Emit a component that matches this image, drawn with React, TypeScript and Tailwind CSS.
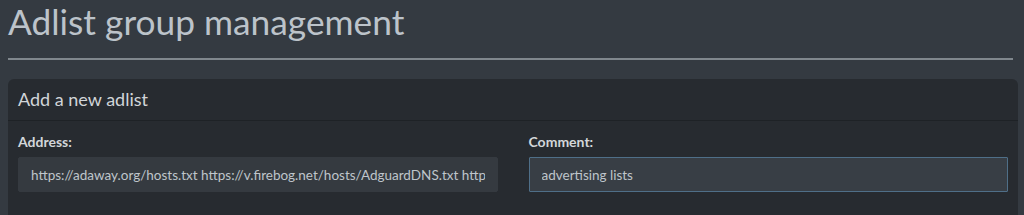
export default function App() {
  return (
    <div className="h-[215px] w-[1024px] overflow-hidden bg-[#343a41] font-['Lato','Liberation_Sans',sans-serif]">
      {/* Page header */}
      <div className="px-2">
        <h1 className="text-[35.3px] leading-[44px] font-normal text-[#bcc3ca]">Adlist group management</h1>
        <div className="mt-[14px] h-[2px] mr-[3px] bg-[#80878d]" />
      </div>

      {/* Add adlist card */}
      <div className="mx-2 mt-[19px] mr-[6px] rounded-t-[6px] bg-[#272b30]">
        <div className="flex h-[42px] items-center border-b border-[#1e2226] px-[10px]">
          <h3 className="text-[18px] text-[#d1d5d9]">Add a new adlist</h3>
        </div>
        <div className="grid grid-cols-2 gap-[31px] px-[10px] pb-6 pt-[11px]">
          <div>
            <label className="block text-[14px] font-bold leading-[20px] text-[#d3d7da]">Address:</label>
            <input
              readOnly
              value="https://adaway.org/hosts.txt https://v.firebog.net/hosts/AdguardDNS.txt https://v.firebog.net/hosts/Easylist.txt"
              className="mt-[5px] h-[35px] w-full rounded-[2px] border border-[#353a40] bg-[#353a40] px-[12px] text-[13.5px] text-[#bfc5cb] outline-none"
            />
          </div>
          <div>
            <label className="block text-[14px] font-bold leading-[20px] text-[#d3d7da]">Comment:</label>
            <input
              readOnly
              value="advertising lists"
              className="mt-[5px] h-[35px] w-full rounded-[1px] border border-[#4f6f88] bg-[#383e45] px-[12px] text-[13.5px] text-[#bfc5cb] outline-none"
            />
          </div>
        </div>
      </div>
    </div>
  );
}
